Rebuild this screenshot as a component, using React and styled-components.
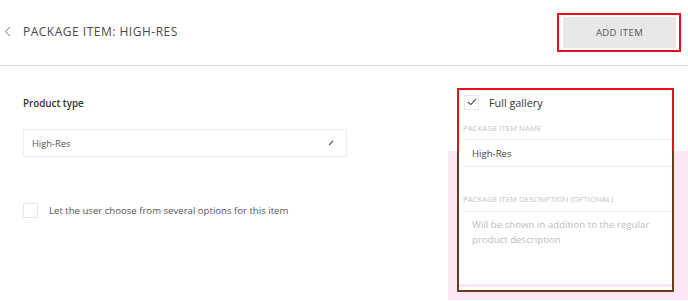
import React from "react";
import styled, { createGlobalStyle } from "styled-components";

const GlobalStyle = createGlobalStyle`
  html, body {
    margin: 0;
    padding: 0;
    background: #ffffff;
    font-family: "Open Sans", "Liberation Sans", sans-serif;
  }
`;

const Page = styled.div`
  width: 688px;
  height: 301px;
  overflow: hidden;
`;

const Header = styled.header`
  height: 66px;
  border-bottom: 1px solid #d9d9d9;
  display: flex;
  align-items: center;
  padding: 0 7px 0 4px;
  box-sizing: border-box;
`;

const Back = styled.span`
  width: 10px;
  display: flex;
  align-items: center;
  margin-right: 9px;
  margin-top: -3px;
`;

const Title = styled.h1`
  margin: 0;
  margin-top: -2px;
  font-size: 12px;
  font-weight: 400;
  letter-spacing: 0.5px;
  color: #4a4a4a;
  flex: 1;
`;

const Highlight = styled.div`
  border: 2px solid #e3101f;
  padding: 2px 3px 2px 4px;
  margin-top: -1px;
`;

const Button = styled.button`
  width: 113px;
  height: 31px;
  border: none;
  background: #e8e8e8;
  color: #555;
  font-family: inherit;
  font-size: 9.5px;
  letter-spacing: 0.4px;
  cursor: pointer;
`;

const Main = styled.div`
  display: flex;
  height: 234px;
`;

const LeftCol = styled.div`
  width: 324px;
  padding-left: 23px;
  padding-top: 31px;
`;

const SectionLabel = styled.div`
  font-size: 9.8px;
  font-weight: 600;
  color: #333;
  line-height: 14px;
`;

const Select = styled.div`
  margin-top: 18px;
  height: 28px;
  border: 1px solid #ececec;
  box-sizing: border-box;
  display: flex;
  align-items: center;
  justify-content: space-between;
  padding: 0 12px 0 8px;
  font-size: 9.3px;
  color: #555;
`;

const CheckRow = styled.label`
  margin-top: 46px;
  display: flex;
  align-items: center;
  gap: 11px;
  font-size: 9.6px;
  color: #555;
`;

const Box = styled.span`
  width: 13px;
  height: 13px;
  border: 1px solid #e6e6e6;
  display: inline-flex;
  align-items: center;
  justify-content: center;
  flex-shrink: 0;
`;

const RightArea = styled.div`
  margin-left: auto;
  width: 240px;
  padding-top: 22px;
  background: linear-gradient(to bottom, transparent 85px, #fce6f4 85px);
`;

const Panel = styled.div`
  margin-left: 9px;
  width: 217px;
  height: 204px;
  box-sizing: border-box;
  border: 2px solid;
  border-image: linear-gradient(to bottom, #e3101f 0 63px, #6e3b1f 63px) 1;
  background: #fff;
  padding: 0 0 3px 4px;
  display: flex;
  flex-direction: column;
`;

const GalleryRow = styled.div`
  height: 24px;
  display: flex;
  align-items: center;
  gap: 10px;
  padding-left: 1px;
  font-size: 10.8px;
  color: #333;
`;

const FieldLabel = styled.div`
  font-size: 7.8px;
  color: #c4c4c4;
  text-transform: uppercase;
  margin-top: ${(p) => p.$top}px;
  line-height: 10px;
`;

const Input = styled.div`
  margin-top: 6px;
  height: 28px;
  border-top: 1px solid #efefef;
  border-bottom: 1px solid #efefef;
  box-sizing: border-box;
  display: flex;
  align-items: center;
  padding-left: 9px;
  font-size: 9.6px;
  color: #444;
`;

const TextArea = styled.div`
  margin-top: 7px;
  flex: 1;
  border-top: 1px solid #efefef;
  padding: 5px 4px 6px 9px;
  font-size: 9.7px;
  line-height: 15px;
  color: #bdbdbd;
`;

const Footer = styled.div`
  height: 3px;
  margin-left: -4px;
  background: #fce6f4;
`;

export default function App() {
  return (
    <>
      <GlobalStyle />
      <Page>
        <Header>
          <Back>
            <svg width="7" height="11" viewBox="0 0 7 11">
              <path d="M6 1 L1.5 5.5 L6 10" fill="none" stroke="#777" strokeWidth="1" />
            </svg>
          </Back>
          <Title>PACKAGE ITEM: HIGH-RES</Title>
          <Highlight>
            <Button>ADD ITEM</Button>
          </Highlight>
        </Header>
        <Main>
          <LeftCol>
            <SectionLabel>Product type</SectionLabel>
            <Select>
              <span>High-Res</span>
              <svg width="6" height="6" viewBox="0 0 6 6">
                <path d="M1 5 L5 1" stroke="#555" strokeWidth="1.1" />
              </svg>
            </Select>
            <CheckRow>
              <Box />
              <span>Let the user choose from several options for this item</span>
            </CheckRow>
          </LeftCol>
          <RightArea>
            <Panel>
              <GalleryRow>
                <Box>
                  <svg width="10" height="8" viewBox="0 0 10 8">
                    <path d="M1 4 L3.8 6.6 L9 1.2" fill="none" stroke="#444" strokeWidth="1.1" />
                  </svg>
                </Box>
                <span>Full gallery</span>
              </GalleryRow>
              <FieldLabel $top={9}>Package item name</FieldLabel>
              <Input>High-Res</Input>
              <FieldLabel $top={27}>Package item description (optional)</FieldLabel>
              <TextArea>Will be shown in addition to the regular product description</TextArea>
              <Footer />
            </Panel>
          </RightArea>
        </Main>
      </Page>
    </>
  );
}
